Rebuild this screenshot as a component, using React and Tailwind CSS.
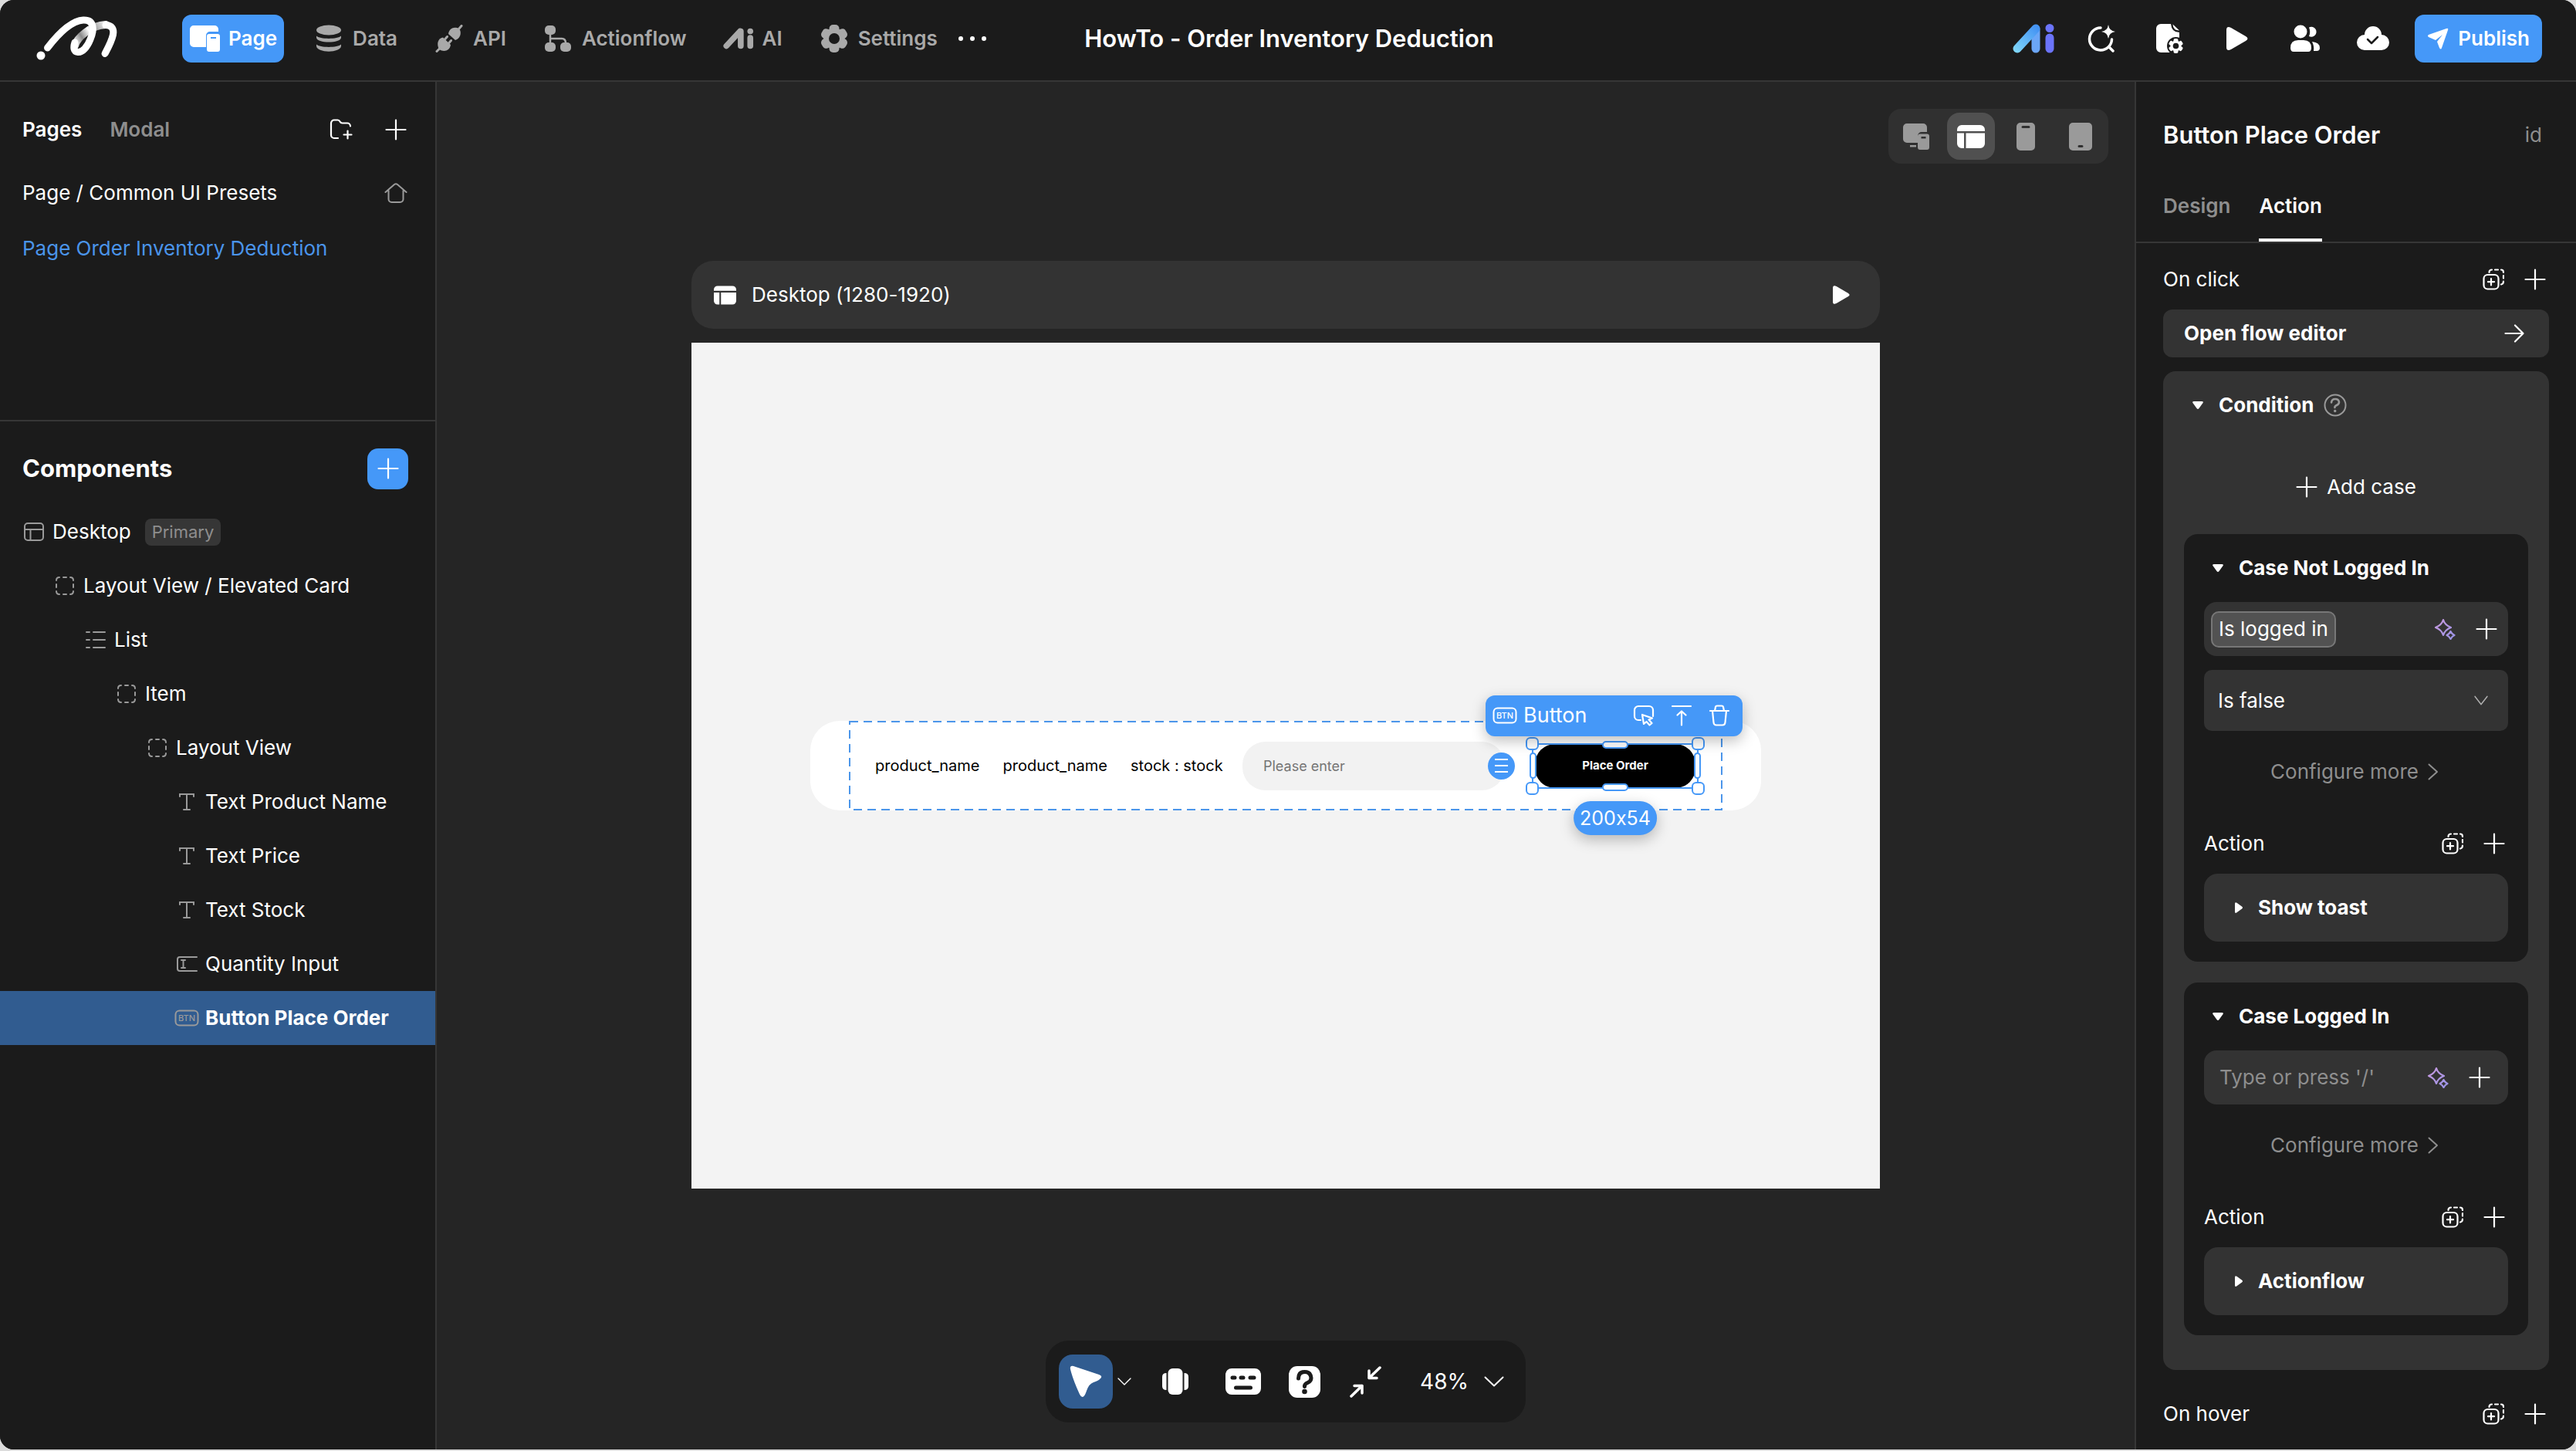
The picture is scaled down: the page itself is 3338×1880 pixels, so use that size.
import clsx from "clsx";

/* ---------- icons ---------- */

function Logo() {
  return (
    <svg width="106" height="58" viewBox="0 0 106 58" fill="none" strokeLinecap="round" strokeLinejoin="round">
      <defs>
        <linearGradient id="logoFold" x1="50" y1="36" x2="92" y2="10" gradientUnits="userSpaceOnUse">
          <stop offset="0" stopColor="#fff" />
          <stop offset="0.25" stopColor="#8a8a8a" />
          <stop offset="0.5" stopColor="#fff" />
          <stop offset="0.7" stopColor="#a8a8a8" />
          <stop offset="1" stopColor="#fff" />
        </linearGradient>
      </defs>
      <path d="M50 38C53 28 70 12 90 11" stroke="url(#logoFold)" strokeWidth="10" />
      <path d="M90 11.500C98 11.500 101 17 99.500 24C97.500 33 93 41 89 48.500" stroke="#fff" strokeWidth="9" />
      <path d="M14.500 41C26 26 44 6 61 5C76 4.500 75 18 70 30C66 40 60 47 54 46.500C48 46 48 40 50 34" stroke="#fff" strokeWidth="9" />
      <circle cx="6" cy="51" r="5.500" fill="#fff" />
    </svg>
  );
}

function PageIcon() {
  return (
    <svg width="40" height="36" viewBox="0 0 40 36" fill="currentColor">
      <path d="M6 1h27a5 5 0 0 1 5 5v3H27a5 5 0 0 0-5 5v15H6a5 5 0 0 1-5-5V6a5 5 0 0 1 5-5z" />
      <path fillRule="evenodd" d="M26 12h11a3 3 0 0 1 3 3v17a3 3 0 0 1-3 3H26a3 3 0 0 1-3-3V15a3 3 0 0 1 3-3zm2 4v2h7v-2z" />
    </svg>
  );
}

function DataIcon() {
  return (
    <svg width="34" height="36" viewBox="0 0 34 36" fill="currentColor">
      <ellipse cx="17" cy="7" rx="16" ry="6.500" />
      <path d="M1 14.500c4 4.500 28 4.500 32 0v2c0 8-32 8-32 0z" />
      <path d="M1 25.500c4 4.500 28 4.500 32 0v2c0 9.500-32 9.500-32 0z" />
    </svg>
  );
}

function ApiIcon() {
  return (
    <svg width="36" height="36" viewBox="0 0 36 36" fill="currentColor" stroke="currentColor" strokeLinecap="round">
      <path d="M17 12c1-8 8-10 14-7 4 6 1 13-5 15z" stroke="none" />
      <path d="M31 5l3-3.500M2 34.500L5.500 31M12 19.500l3.500-4M17.500 24l3-3.500" strokeWidth="3" fill="none" />
      <path d="M10 16.500L20 26c-1 8-9 10-15 6C1.500 25 3 18 10 16.500z" stroke="none" />
    </svg>
  );
}

function FlowIcon() {
  return (
    <svg width="36" height="36" viewBox="0 0 36 36" fill="currentColor">
      <rect x="1" y="1" width="14" height="12" rx="5" />
      <rect x="1" y="23" width="14" height="12" rx="5" />
      <rect x="21" y="23" width="14" height="12" rx="5" />
      <path d="M8 12v12M8 18h15q5 0 5 6" fill="none" stroke="currentColor" strokeWidth="2.500" />
    </svg>
  );
}

function AiIcon() {
  return (
    <svg width="42" height="30" viewBox="0 0 42 30" fill="none" stroke="currentColor" strokeLinecap="round">
      <path d="M4.500 25L23 5" strokeWidth="8" />
      <path d="M24 5V25" strokeWidth="8" />
      <path d="M37 14V25" strokeWidth="8" />
      <circle cx="37" cy="5" r="4" fill="currentColor" stroke="none" />
    </svg>
  );
}

function AiColorIcon() {
  return (
    <svg width="56" height="40" viewBox="0 0 56 40" fill="none" strokeLinecap="round">
      <defs>
        <linearGradient id="aiStroke" x1="4" y1="36" x2="32" y2="6" gradientUnits="userSpaceOnUse">
          <stop offset="0" stopColor="#7fd6fa" />
          <stop offset="1" stopColor="#4493f3" />
        </linearGradient>
      </defs>
      <path d="M31 8V33" stroke="#6ba6f7" strokeWidth="11" />
      <path d="M7 33L31 7" stroke="url(#aiStroke)" strokeWidth="11" />
      <path d="M49 19V33" stroke="#6b74fb" strokeWidth="11" />
      <circle cx="49" cy="6.500" r="5.500" fill="#6b74fb" />
    </svg>
  );
}

function GearIcon() {
  return (
    <svg width="38" height="38" viewBox="0 0 38 38" fill="currentColor">
      <rect x="12.500" y="1" width="13" height="36" rx="5" />
      <rect x="12.500" y="1" width="13" height="36" rx="5" transform="rotate(60 19 19)" />
      <rect x="12.500" y="1" width="13" height="36" rx="5" transform="rotate(120 19 19)" />
      <circle cx="19" cy="19" r="13.500" />
      <circle cx="19" cy="19" r="7" fill="#1b1b1b" />
    </svg>
  );
}

function SearchSparkIcon() {
  return (
    <svg width="36" height="36" viewBox="0 0 36 36" fill="none" stroke="currentColor" strokeLinecap="round">
      <path d="M17 4a14.500 14.500 0 1 0 14.500 15M27.500 28.500L33 34" strokeWidth="3.500" />
      <path d="M27 0q1 8 9 9q-8 1-9 9q-1-8-9-9q8-1 9-9z" fill="currentColor" stroke="none" />
    </svg>
  );
}

function DocGearIcon() {
  return (
    <svg width="36" height="38" viewBox="0 0 36 38" fill="currentColor">
      <path d="M7 0h13q1 11 11 11v24q0 2-3 2H7a6 6 0 0 1-6-6V6a6 6 0 0 1 6-6z" />
      <path d="M22.500 0.500l8.500 8q-8 0-8.500-8z" />
      <circle cx="26.500" cy="28.500" r="11.500" fill="#1b1b1b" />
      <rect x="23.500" y="19" width="6" height="19" rx="2" />
      <rect x="23.500" y="19" width="6" height="19" rx="2" transform="rotate(60 26.500 28.500)" />
      <rect x="23.500" y="19" width="6" height="19" rx="2" transform="rotate(120 26.500 28.500)" />
      <circle cx="26.500" cy="28.500" r="7" />
      <circle cx="26.500" cy="28.500" r="3.800" fill="#1b1b1b" />
    </svg>
  );
}

function PlayIcon({ className }) {
  return (
    <svg viewBox="0 0 28 30" className={className} fill="currentColor">
      <path d="M0 4Q0-2 6 1L25 12Q30 15 25 18L6 29Q0 32 0 26z" />
    </svg>
  );
}

function PeopleIcon() {
  return (
    <svg width="40" height="36" viewBox="0 0 40 36" fill="currentColor">
      <circle cx="14" cy="9" r="8.500" />
      <path d="M1 30q0-10 10-10h7q10 0 10 10q0 5-4 5H5q-4 0-4-5z" />
      <path d="M25 3.500a6.500 6.500 0 1 1 0 11.500q2.500-6 0-11.500z" />
      <path d="M29 22q10 1 10 8q0 4-4 4h-4q1-6-2-12z" />
    </svg>
  );
}

function CloudCheckIcon() {
  return (
    <svg width="42" height="32" viewBox="0 0 42 32" fill="currentColor">
      <path d="M10 11a11 11 0 0 1 22 0a10 10 0 0 1 0 20H10a10 10 0 0 1 0-20z" />
      <path d="M14 17l5 5l8-8" fill="none" stroke="#1b1b1b" strokeWidth="2.500" strokeLinecap="round" strokeLinejoin="round" />
    </svg>
  );
}

function SendIcon() {
  return (
    <svg width="28" height="28" viewBox="0 0 28 28" fill="currentColor">
      <path d="M2 9L25 1q3-1 2 2L19 26q-1 3-3 0l-3-8l7-9l-9 7l-9-4q-2-1.500 0-3z" />
    </svg>
  );
}

function PlusIcon() {
  return (
    <svg width="28" height="28" viewBox="0 0 28 28" fill="none" stroke="currentColor" strokeWidth="2.200" strokeLinecap="round">
      <path d="M14 1.500V26.500M1.500 14H26.500" />
    </svg>
  );
}

function FolderPlusIcon() {
  return (
    <svg width="30" height="28" viewBox="0 0 30 28" fill="none" stroke="currentColor" strokeWidth="2.200" strokeLinecap="round" strokeLinejoin="round">
      <path d="M11 25H6a4 4 0 0 1-4-4V5.500a4 4 0 0 1 4-4h4.500q2 0 3 2t3 2H23a4 4 0 0 1 4 4" />
      <path d="M23.500 15.500v10M18.500 20.500h10" />
    </svg>
  );
}

function HomeIcon() {
  return (
    <svg width="30" height="28" viewBox="0 0 30 28" fill="none" stroke="currentColor" strokeWidth="2" strokeLinecap="round" strokeLinejoin="round">
      <path d="M1.500 13L13 3q2-1.500 4 0L28.500 13M5.500 10.500V22a4 4 0 0 0 4 4h11a4 4 0 0 0 4-4V10.500" />
    </svg>
  );
}

function WindowIcon() {
  return (
    <svg width="28" height="26" viewBox="0 0 28 26" fill="none" stroke="currentColor" strokeWidth="2">
      <rect x="2" y="2" width="24" height="22" rx="4" />
      <path d="M2 10H26M9.500 10V24" />
    </svg>
  );
}

function DashedBoxIcon() {
  return (
    <svg width="26" height="26" viewBox="0 0 26 26" fill="none" stroke="currentColor" strokeWidth="2" strokeLinecap="round">
      <path d="M2 6q0-4 4-4M20 2q4 0 4 4M24 20q0 4-4 4M6 24q-4 0-4-4M11 2h4M11 24h4M2 11v4M24 11v4" />
    </svg>
  );
}

function ListIcon() {
  return (
    <svg width="28" height="24" viewBox="0 0 28 24" fill="none" stroke="currentColor" strokeWidth="2" strokeLinecap="round">
      <path d="M2 2h4M11 2h15M2 12h4M11 12h15M2 22h4M11 22h15" />
    </svg>
  );
}

function TextIcon() {
  return (
    <svg width="22" height="24" viewBox="0 0 22 24" fill="none" stroke="currentColor" strokeWidth="2" strokeLinecap="round">
      <path d="M2 5V2H20V5M11 2V22M7 22h8" />
    </svg>
  );
}

function InputIcon() {
  return (
    <svg width="28" height="22" viewBox="0 0 28 22" fill="none" stroke="currentColor" strokeWidth="2" strokeLinecap="round">
      <path d="M27 2H5a3 3 0 0 0-3 3v12a3 3 0 0 0 3 3h22M7 6h5M7 16h5M9.500 6v10" />
    </svg>
  );
}

function BtnIcon() {
  return (
    <svg width="32" height="22" viewBox="0 0 32 22" fill="none" className="shrink-0">
      <rect x="1.500" y="1.500" width="29" height="19" rx="5" stroke="currentColor" strokeWidth="2" />
      <text x="16" y="15" textAnchor="middle" fontSize="11" fontWeight="500" fill="currentColor">
        BTN
      </text>
    </svg>
  );
}

function PanelSolidIcon({ className }) {
  return (
    <svg viewBox="0 0 36 30" className={className} fill="currentColor">
      <path d="M6 0h24a6 6 0 0 1 6 6v2H0V6a6 6 0 0 1 6-6zM0 10.500h9V30H6a6 6 0 0 1-6-6zM11.500 10.500H36V24a6 6 0 0 1-6 6H11.500z" />
    </svg>
  );
}

function ResponsiveIcon() {
  return (
    <svg width="34" height="34" viewBox="0 0 34 34" fill="currentColor">
      <path d="M5 0h21a5 5 0 0 1 5 5v6h-7a5 5 0 0 0-5 5v9H5a5 5 0 0 1-5-5V5a5 5 0 0 1 5-5zM9 28h8v2.500H9z" />
      <path fillRule="evenodd" d="M22 13.500h9a3 3 0 0 1 3 3V31a3 3 0 0 1-3 3h-9a3 3 0 0 1-3-3V16.500a3 3 0 0 1 3-3zm1.500 3.500v2.500h6V17z" />
    </svg>
  );
}

function PhoneIcon() {
  return (
    <svg width="26" height="36" viewBox="0 0 26 36" fill="currentColor">
      <path fillRule="evenodd" d="M6 0h14a5 5 0 0 1 5 5v26a5 5 0 0 1-5 5H6a5 5 0 0 1-5-5V5a5 5 0 0 1 5-5zm3 4a1.500 1.500 0 0 0 0 3h8a1.500 1.500 0 0 0 0-3z" />
    </svg>
  );
}

function TabletIcon() {
  return (
    <svg width="30" height="36" viewBox="0 0 30 36" fill="currentColor">
      <path fillRule="evenodd" d="M5 0h20a5 5 0 0 1 5 5v26a5 5 0 0 1-5 5H5a5 5 0 0 1-5-5V5a5 5 0 0 1 5-5zm8 29a1.500 1.500 0 0 0 0 3h4a1.500 1.500 0 0 0 0-3z" />
    </svg>
  );
}

function CopyPlusIcon() {
  return (
    <svg width="28" height="28" viewBox="0 0 28 28" fill="none" stroke="currentColor" strokeWidth="2.200" strokeLinecap="round">
      <rect x="1.500" y="8" width="19" height="18.500" rx="5" />
      <path d="M11 13v8.500M7 17.200h8" />
      <path d="M8.500 5q0-3.500 3.500-3.500M16 1.500h4M24 1.500q3 0 3 3.500M27 9v3.500M27 16.500q0 3.500-3 4" />
    </svg>
  );
}

function SparklesIcon() {
  return (
    <svg width="28" height="28" viewBox="0 0 28 28" fill="none" stroke="url(#spark)" strokeWidth="2.200" strokeLinejoin="round">
      <defs>
        <linearGradient id="spark" x1="4" y1="2" x2="26" y2="26" gradientUnits="userSpaceOnUse">
          <stop offset="0" stopColor="#c79ae0" />
          <stop offset="1" stopColor="#9a93e6" />
        </linearGradient>
      </defs>
      <path d="M12 2q2 7 10 10q-8 3-10 10q-2-7-10-10q8-3 10-10z" />
      <path d="M21.500 17q1.500 3.500 5 5q-3.500 1.500-5 5q-1.500-3.500-5-5q3.500-1.500 5-5z" />
    </svg>
  );
}

function Chevron({ className }) {
  return (
    <svg
      viewBox="0 0 26 14"
      preserveAspectRatio="none"
      className={className}
      fill="none"
      stroke="currentColor"
      strokeWidth="2"
      strokeLinecap="round"
      strokeLinejoin="round"
    >
      <path d="M1.500 1.500L13 12.500L24.500 1.500" />
    </svg>
  );
}

function ChevronRight() {
  return (
    <svg width="14" height="22" viewBox="0 0 14 22" fill="none" stroke="currentColor" strokeWidth="2" strokeLinecap="round" strokeLinejoin="round">
      <path d="M1.500 1.500L12 11L1.500 20.500" />
    </svg>
  );
}

function ArrowRight() {
  return (
    <svg width="26" height="24" viewBox="0 0 26 24" fill="none" stroke="currentColor" strokeWidth="2.200" strokeLinecap="round" strokeLinejoin="round">
      <path d="M1.500 12H24.500M14 1.500L24.500 12L14 22.500" />
    </svg>
  );
}

function Caret({ open }) {
  return (
    <svg width="14" height="14" viewBox="0 0 14 14" fill="currentColor" className={open ? "" : "-rotate-90"}>
      <path d="M2 2h10q3 0 1.200 2.500L8.500 11q-1.500 2-3 0L.8 4.500Q-1 2 2 2z" />
    </svg>
  );
}

function HelpIcon() {
  return (
    <svg width="30" height="30" viewBox="0 0 30 30" fill="none" stroke="currentColor" strokeLinecap="round">
      <circle cx="15" cy="15" r="13.500" strokeWidth="2" />
      <path d="M10 11.500q.5-4.500 5-4.500t5 4q0 2.500-3 4t-2.500 3" strokeWidth="2.600" />
      <circle cx="14.700" cy="22.500" r="1.700" fill="currentColor" stroke="none" />
    </svg>
  );
}

/* ---------- header ---------- */

const navItems = [
  { label: "Page", icon: PageIcon, active: true },
  { label: "Data", icon: DataIcon },
  { label: "API", icon: ApiIcon },
  { label: "Actionflow", icon: FlowIcon },
  { label: "AI", icon: AiIcon },
  { label: "Settings", icon: GearIcon },
];

const tools = [
  { label: "AI assistant", icon: AiColorIcon },
  { label: "Search", icon: SearchSparkIcon },
  { label: "Page settings", icon: DocGearIcon },
  { label: "Preview", icon: () => <PlayIcon className="w-7 h-[30px]" /> },
  { label: "Collaborators", icon: PeopleIcon },
  { label: "Cloud", icon: CloudCheckIcon },
];

function Header() {
  return (
    <header className="grid grid-cols-[1fr_auto_1fr] items-center h-[106px] pl-[47px] pr-[44px] pb-1 border-b-2 border-[#363636] bg-[#1b1b1b] shrink-0">
      <div className="flex items-center">
        <Logo />
        <nav className="flex items-center gap-[29px] ml-[83px]">
          {navItems.map(({ label, icon: Icon, active }) => (
            <button
              key={label}
              className={clsx(
                "flex items-center gap-[11px] h-[62px] px-[9px] rounded-xl font-semibold",
                active ? "bg-[#4598f8] text-white" : "text-[#a9a9a9]"
              )}
            >
              <span className="w-10 flex justify-center">
                <Icon />
              </span>
              {label}
            </button>
          ))}
        </nav>
        <button aria-label="More" className="flex gap-[9px] ml-[18px]">
          <span className="size-[6px] rounded-full bg-white" />
          <span className="size-[6px] rounded-full bg-white" />
          <span className="size-[6px] rounded-full bg-white" />
        </button>
      </div>
      <h1 className="text-[31px] font-semibold">HowTo - Order Inventory Deduction</h1>
      <div className="flex items-center justify-end gap-6">
        <div className="flex items-center gap-7">
          {tools.map(({ label, icon: Icon }) => (
            <button key={label} aria-label={label} className="w-[60px] flex justify-center">
              <Icon />
            </button>
          ))}
        </div>
        <button className="flex items-center gap-3 h-[62px] px-4 rounded-xl bg-[#4598f8] font-semibold">
          <SendIcon />
          Publish
        </button>
      </div>
    </header>
  );
}

/* ---------- left sidebar ---------- */

const tree = [
  { label: "Desktop", icon: WindowIcon, indent: "pl-[30px]", badge: "Primary" },
  { label: "Layout View / Elevated Card", icon: DashedBoxIcon, indent: "pl-[70px]" },
  { label: "List", icon: ListIcon, indent: "pl-[110px]" },
  { label: "Item", icon: DashedBoxIcon, indent: "pl-[150px]" },
  { label: "Layout View", icon: DashedBoxIcon, indent: "pl-[190px]" },
  { label: "Text Product Name", icon: TextIcon, indent: "pl-[228px]" },
  { label: "Text Price", icon: TextIcon, indent: "pl-[228px]" },
  { label: "Text Stock", icon: TextIcon, indent: "pl-[228px]" },
  { label: "Quantity Input", icon: InputIcon, indent: "pl-[228px]" },
  { label: "Button Place Order", icon: BtnIcon, indent: "pl-[228px]", active: true },
];

function Sidebar() {
  return (
    <aside className="w-[566px] shrink-0 bg-[#1b1b1b] border-r-2 border-[#363636]">
      <section className="h-[440px] border-b-2 border-[#363636] px-[29px]">
        <div className="flex items-center h-[108px] pt-4">
          <button className="font-semibold">Pages</button>
          <button className="font-semibold text-[#8e8e8e] ml-9">Modal</button>
          <button aria-label="New folder" className="ml-auto">
            <FolderPlusIcon />
          </button>
          <button aria-label="New page" className="ml-[42px] mr-2">
            <PlusIcon />
          </button>
        </div>
        <a href="#presets" className="flex items-center justify-between h-[72px] pr-[7px]">
          Page / Common UI Presets
          <span className="text-[#9a9a9a]">
            <HomeIcon />
          </span>
        </a>
        <a href="#deduction" className="flex items-center h-[72px] text-[#4a94ea]">
          Page Order Inventory Deduction
        </a>
      </section>

      <section>
        <div className="flex items-center justify-between h-[108px] pt-[14px] pl-[29px] pr-[35px]">
          <h2 className="text-[31px] font-bold">Components</h2>
          <button aria-label="Add component" className="size-[53px] rounded-[14px] bg-[#4598f8] flex items-center justify-center">
            <PlusIcon />
          </button>
        </div>
        <ul>
          {tree.map(({ label, icon: Icon, indent, badge, active }) => (
            <li key={label}>
              <button
                className={clsx("flex items-center gap-[10px] w-full h-[70px]", indent, active && "bg-[#315c90] font-bold")}
              >
                <span className="w-7 flex justify-center shrink-0 text-[#9a9a9a]">
                  <Icon />
                </span>
                {label}
                {badge && (
                  <span className="ml-2 px-[9px] h-[35px] rounded-lg bg-[#363636] text-[22px] leading-[35px] text-[#8e8e8e]">
                    {badge}
                  </span>
                )}
              </button>
            </li>
          ))}
        </ul>
      </section>
    </aside>
  );
}

/* ---------- canvas ---------- */

const devices = [
  { label: "Responsive", icon: ResponsiveIcon },
  { label: "Desktop", icon: () => <PanelSolidIcon className="w-9 h-[30px]" />, active: true },
  { label: "Phone", icon: PhoneIcon },
  { label: "Tablet", icon: TabletIcon },
];

function DeviceSwitch() {
  return (
    <div className="flex gap-[9px] p-[5px] rounded-2xl bg-[#303030]">
      {devices.map(({ label, icon: Icon, active }) => (
        <button
          key={label}
          aria-label={label}
          className={clsx(
            "w-[62px] h-[61px] rounded-2xl flex items-center justify-center",
            active ? "bg-[#505050] text-white" : "text-[#9a9a9a]"
          )}
        >
          <Icon />
        </button>
      ))}
    </div>
  );
}

function Selection() {
  const corner = "absolute size-[17px] rounded-[6px] border-2 border-[#4598f8] bg-white";
  const bar = "absolute border-2 border-[#4598f8] bg-white rounded-[5px]";
  return (
    <div className="absolute -inset-x-1 -inset-y-px border-2 border-[#4598f8] pointer-events-none">
      <span className={clsx(bar, "w-[34px] h-[10px] left-1/2 -translate-x-1/2 -top-[5px]")} />
      <span className={clsx(bar, "w-[34px] h-[10px] left-1/2 -translate-x-1/2 -bottom-[5px]")} />
      <span className={clsx(bar, "w-[9px] h-[34px] top-1/2 -translate-y-1/2 -left-[5px]")} />
      <span className={clsx(bar, "w-[9px] h-[34px] top-1/2 -translate-y-1/2 -right-[5px]")} />
      <span className={clsx(corner, "-left-[10px] -top-[10px]")} />
      <span className={clsx(corner, "-right-[10px] -top-[10px]")} />
      <span className={clsx(corner, "-left-[10px] -bottom-[10px]")} />
      <span className={clsx(corner, "-right-[10px] -bottom-[10px]")} />
    </div>
  );
}

function ElementToolbar() {
  return (
    <div className="absolute -left-[64px] -top-[63px] w-[333px] h-[53px] flex items-center pl-[9px] pr-4 rounded-xl bg-[#4598f8] text-white shadow-[0_6px_18px_rgba(0,0,0,0.25)]">
      <BtnIcon />
      <span className="ml-2 text-[27px]">Button</span>
      <div className="flex gap-[21px] ml-auto">
        <button aria-label="Select parent">
          <svg width="28" height="28" viewBox="0 0 28 28" fill="none" stroke="currentColor" strokeWidth="2.200" strokeLinecap="round" strokeLinejoin="round">
            <path d="M10 20H7a5 5 0 0 1-5-5V7a5 5 0 0 1 5-5h14a5 5 0 0 1 5 5v8" />
            <path d="M12 13l2 12l3.500-3l4 4.500l3-2.500l-4-4.500l4.500-2z" />
          </svg>
        </button>
        <button aria-label="Move to top">
          <svg width="28" height="28" viewBox="0 0 28 28" fill="none" stroke="currentColor" strokeWidth="2.200" strokeLinecap="round" strokeLinejoin="round">
            <path d="M2 2h24M14 26.500V9M8.500 13.500L14 8.500l5.500 5" />
          </svg>
        </button>
        <button aria-label="Delete">
          <svg width="28" height="28" viewBox="0 0 28 28" fill="none" stroke="currentColor" strokeWidth="2.200" strokeLinecap="round" strokeLinejoin="round">
            <path d="M2 8h24M8 8l1-5q.3-1.500 2-1.500h6q1.700 0 2 1.500l1 5M5 8l1.500 15q.3 3.500 3.500 3.500h8q3.200 0 3.500-3.500L23 8" />
          </svg>
        </button>
      </div>
    </div>
  );
}

function ElevatedCard() {
  return (
    <div className="w-4/5 h-[116px] flex justify-center rounded-[38px] bg-white text-black text-[20px]">
      <div className="relative flex items-center flex-1 mx-[50px] pl-[34px] pr-[35px]">
        <svg className="absolute inset-0 w-full h-full pointer-events-none" fill="none">
          <rect x="1" y="1" stroke="#4c96ea" strokeWidth="2" strokeDasharray="11 7" className="w-[calc(100%-2px)] h-[calc(100%-2px)]" />
        </svg>
        <span>product_name</span>
        <span className="ml-[30px]">product_name</span>
        <span className="ml-[30px]">stock : stock</span>
        <input
          aria-label="Quantity"
          placeholder="Please enter"
          className="ml-auto w-[340px] h-[63px] px-[27px] rounded-[30px] bg-[#f2f2f2] text-[18px] placeholder:text-[#757575]"
        />
        <div className="relative ml-[39px]">
          <button className="block w-[208px] h-[57px] rounded-[26px] bg-black text-white text-[15px] font-bold">
            Place Order
          </button>
          <Selection />
          <ElementToolbar />
          <span className="absolute -left-[61px] top-[11px] size-[35px] rounded-full bg-[#4598f8] flex flex-col items-center justify-center gap-[6px]">
            <span className="w-[17px] h-[2px] bg-white" />
            <span className="w-[17px] h-[2px] bg-white" />
            <span className="w-[17px] h-[2px] bg-white" />
          </span>
          <span className="absolute left-1/2 -translate-x-1/2 top-[74px] h-11 px-2 rounded-full bg-[#4598f8] text-white text-[25px] leading-[44px] shadow-[0_6px_18px_rgba(0,0,0,0.25)]">
            200x54
          </span>
        </div>
      </div>
    </div>
  );
}

function BottomBar() {
  return (
    <div className="flex items-center h-[106px] pl-[17px] pr-7 rounded-[30px] bg-[#1b1b1b]">
      <button aria-label="Select tool" className="size-[70px] rounded-[18px] bg-[#315c90] flex items-center justify-center">
        <svg width="42" height="42" viewBox="0 0 42 42" fill="currentColor">
          <path d="M1 5Q0 0 5 1L38 12q6 2 1 6q-2 2-8 4q-6 2-9 11q-2 6-4 7.500q-3 1.500-5-3Q4 18 1 5z" />
        </svg>
      </button>
      <button aria-label="Tool options" className="ml-[6px]">
        <Chevron className="w-[18px] h-[10px]" />
      </button>
      <button aria-label="Preview frames" className="ml-10">
        <svg width="34" height="34" viewBox="0 0 34 34" fill="currentColor">
          <rect x="7.500" y="0" width="19" height="34" rx="6" />
          <path d="M5.500 6v22Q0 28 0 23V11Q0 6 5.500 6zM28.500 6v22q5.500 0 5.500-5V11q0-5-5.500-5z" />
        </svg>
      </button>
      <button aria-label="Shortcuts" className="ml-12">
        <svg width="46" height="34" viewBox="0 0 46 34" fill="currentColor">
          <path
            fillRule="evenodd"
            d="M8 0h30a8 8 0 0 1 8 8v18a8 8 0 0 1-8 8H8a8 8 0 0 1-8-8V8a8 8 0 0 1 8-8zM9 9.500a2.500 2.500 0 0 0 0 5h3a2.500 2.500 0 0 0 0-5zm11 0a2.500 2.500 0 0 0 0 5h3a2.500 2.500 0 0 0 0-5zm12 0a2.500 2.500 0 0 0 0 5h5a2.500 2.500 0 0 0 0-5zM13.500 22.500a2.500 2.500 0 0 0 0 5h19a2.500 2.500 0 0 0 0-5z"
          />
        </svg>
      </button>
      <button aria-label="Help" className="ml-9">
        <svg width="41" height="41" viewBox="0 0 41 41">
          <rect width="41" height="41" rx="11" fill="currentColor" />
          <path d="M12.500 16q0-8.500 8-8.500t8.500 8q0 4-4.500 6t-4 5" fill="none" stroke="#1b1b1b" strokeWidth="5" strokeLinecap="round" />
          <circle cx="20.500" cy="33" r="3.300" fill="#1b1b1b" />
        </svg>
      </button>
      <button aria-label="Collapse" className="ml-[38px]">
        <svg width="41" height="41" viewBox="0 0 41 41" fill="none" stroke="currentColor" strokeWidth="3.500" strokeLinecap="round" strokeLinejoin="round">
          <path d="M39 2L25 15.500M25 6v9.500h10M2 39l14-13.500M6 25.500h10V35" />
        </svg>
      </button>
      <button className="flex items-center gap-5 ml-[50px] text-[28px]">
        48%
        <Chevron className="w-[26px] h-[14px]" />
      </button>
    </div>
  );
}

function Canvas() {
  return (
    <main className="flex-1 min-w-0 flex flex-col items-center bg-[#252525]">
      <div className="self-end mt-[35px] mr-[34px]">
        <DeviceSwitch />
      </div>
      <div className="w-[70%] mt-[126px]">
        <div className="flex items-center h-[88px] pl-[29px] pr-[39px] rounded-[28px] bg-[#333333]">
          <PanelSolidIcon className="w-[29px] h-[25px]" />
          <span className="ml-5">Desktop (1280-1920)</span>
          <button aria-label="Preview frame" className="ml-auto">
            <PlayIcon className="w-[22px] h-6" />
          </button>
        </div>
        <div className="mt-[18px] h-[1096px] bg-[#f3f3f3] flex items-center justify-center">
          <ElevatedCard />
        </div>
      </div>
      <div className="mt-auto mb-[35px]">
        <BottomBar />
      </div>
    </main>
  );
}

/* ---------- right panel ---------- */

function EventRow({ title }) {
  return (
    <div className="flex items-center h-[86px] pt-2 pr-1 shrink-0">
      <span>{title}</span>
      <button aria-label={`Paste ${title}`} className="ml-auto">
        <CopyPlusIcon />
      </button>
      <button aria-label={`Add ${title}`} className="ml-[26px]">
        <PlusIcon />
      </button>
    </div>
  );
}

function CaseCard({ title, action, children }) {
  return (
    <section className="px-[26px] pb-[26px] rounded-[18px] bg-[#1b1b1b]">
      <button className="flex items-center gap-5 h-[88px] pl-[11px] font-bold">
        <Caret open />
        {title}
      </button>
      {children}
      <div className="flex items-center justify-center h-[106px]">
        <button className="flex items-center gap-3 pr-1 text-[#8e8e8e]">
          Configure more
          <ChevronRight />
        </button>
      </div>
      <div className="flex items-center h-[79px] pr-1">
        <span>Action</span>
        <button aria-label="Paste action" className="ml-auto">
          <CopyPlusIcon />
        </button>
        <button aria-label="Add action" className="ml-[26px]">
          <PlusIcon />
        </button>
      </div>
      <button className="flex items-center gap-[18px] w-full h-[88px] pl-[38px] rounded-[18px] bg-[#333333] font-bold">
        <Caret />
        {action}
      </button>
    </section>
  );
}

function Inspector() {
  return (
    <aside className="w-[572px] shrink-0 flex flex-col bg-[#1b1b1b] border-l-2 border-[#363636]">
      <div className="flex items-center justify-between h-[114px] pt-6 pl-[35px] pr-[44px] shrink-0">
        <h2 className="text-[31px] font-semibold">Button Place Order</h2>
        <span className="text-[#8e8e8e]">id</span>
      </div>
      <div className="flex gap-[37px] h-[95px] px-[35px] border-b-2 border-[#363636] font-semibold shrink-0">
        <button className="border-y-4 border-transparent text-[#8e8e8e]">Design</button>
        <button className="border-y-4 border-t-transparent border-b-white">Action</button>
      </div>

      <div className="flex-1 min-h-0 mb-7 px-[35px] overflow-hidden">
        <EventRow title="On click" />
        <button className="flex items-center justify-between w-full h-[62px] pl-[27px] pr-8 rounded-xl bg-[#333333] font-bold">
          Open flow editor
          <ArrowRight />
        </button>

        <div className="mt-[18px] px-[27px] pb-[45px] rounded-2xl bg-[#333333]">
          <div className="flex items-center h-[88px] pl-[11px]">
            <button className="flex items-center gap-5 font-bold">
              <Caret open />
              Condition
            </button>
            <button aria-label="About conditions" className="ml-3 text-[#9a9a9a]">
              <HelpIcon />
            </button>
          </div>
          <div className="flex items-center justify-center h-[123px]">
            <button className="flex items-center gap-3">
              <PlusIcon />
              Add case
            </button>
          </div>

          <div className="flex flex-col gap-[27px]">
            <CaseCard title="Case Not Logged In" action="Show toast">
              <div className="flex items-center h-[70px] pl-[9px] pr-[14px] rounded-2xl bg-[#333333]">
                <span className="h-[47px] px-2 flex items-center rounded-[10px] border-2 border-[#777777] bg-[#525252]">
                  Is logged in
                </span>
                <button aria-label="Generate condition" className="ml-auto">
                  <SparklesIcon />
                </button>
                <button aria-label="Add condition" className="ml-[26px]">
                  <PlusIcon />
                </button>
              </div>
              <div className="relative mt-[18px]">
                <select aria-label="Operator" className="appearance-none block w-full h-[79px] px-[18px] rounded-[10px] bg-[#333333]">
                  <option>Is false</option>
                  <option>Is true</option>
                </select>
                <span className="absolute right-[26px] inset-y-0 flex items-center text-[#b0b0b0] pointer-events-none">
                  <Chevron className="w-[18px] h-[13px]" />
                </span>
              </div>
            </CaseCard>

            <CaseCard title="Case Logged In" action="Actionflow">
              <div className="flex items-center h-[70px] pl-5 pr-[23px] rounded-2xl bg-[#333333]">
                <input
                  aria-label="Condition value"
                  placeholder="Type or press '/'"
                  className="flex-1 min-w-0 bg-transparent placeholder:text-[#8e8e8e]"
                />
                <button aria-label="Generate value">
                  <SparklesIcon />
                </button>
                <button aria-label="Add value" className="ml-[26px]">
                  <PlusIcon />
                </button>
              </div>
            </CaseCard>
          </div>
        </div>

        <div className="mt-[10px]">
          <EventRow title="On hover" />
        </div>
      </div>
    </aside>
  );
}

export default function App() {
  return (
    <div className="h-screen pb-[2px] bg-[#dcdcdc]">
      <div className="h-full flex flex-col rounded-[18px] overflow-hidden bg-[#1b1b1b] text-white text-[26px] leading-8 font-['Inter','Noto_Sans',sans-serif] [font-feature-settings:'calt'_0]">
        <Header />
        <div className="flex flex-1 min-h-0">
          <Sidebar />
          <Canvas />
          <Inspector />
        </div>
      </div>
    </div>
  );
}
